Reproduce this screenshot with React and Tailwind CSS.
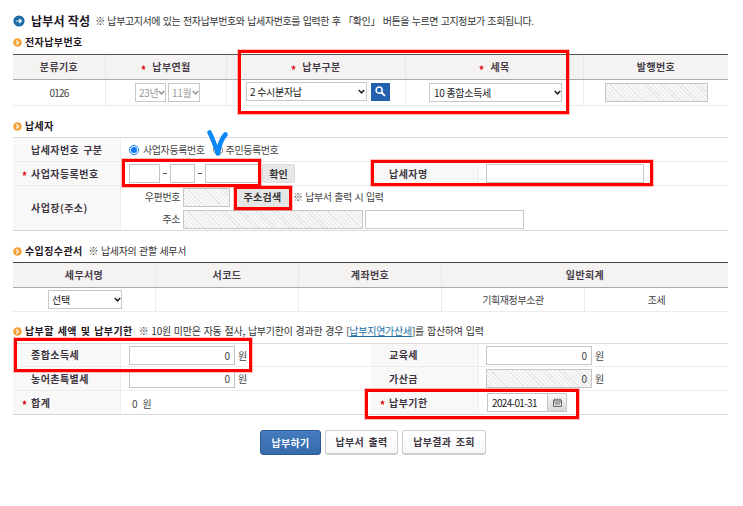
import React from 'react';

const hatch =
  'bg-[repeating-linear-gradient(45deg,#f8f8f8_0px,#f8f8f8_2px,#e6e6e6_2px,#e6e6e6_3px)]';

function Bullet() {
  return (
    <svg viewBox="0 0 18 18" className="h-[9px] w-[9px] shrink-0">
      <circle cx="9" cy="9" r="8.6" fill="#f5a238" />
      <path d="M6.5 5 L11 9 L6.5 13" fill="none" stroke="#fff" strokeWidth="2.4" />
    </svg>
  );
}

function Heading({ children, note, className }) {
  return (
    <div className={`flex h-4 items-center text-[#1c1420] ${className}`}>
      <Bullet />
      <h2 className="ml-[3px] text-[10px] font-bold tracking-[0.4px] [word-spacing:1.2px]">{children}</h2>
      {note}
    </div>
  );
}

function Star({ className = 'mr-[6px]' }) {
  return (
    <svg viewBox="0 0 10 10" className={`h-[5px] w-[5px] shrink-0 ${className}`}>
      <path d="M5 0 L6.2 3 L10 3.6 L7 6 L8 10 L5 8 L2 10 L3 6 L0 3.6 L3.8 3 Z" fill="#d9141c" />
    </svg>
  );
}

function Chevron({ className = '' }) {
  return (
    <svg viewBox="0 0 14 10" className={`h-[5px] w-[7px] shrink-0 ${className}`}>
      <path d="M1.5 2 L7 7.5 L12.5 2" fill="none" stroke="currentColor" strokeWidth="3.2" />
    </svg>
  );
}

function Select({ children, className }) {
  return (
    <div className={`flex h-[19px] shrink-0 items-center justify-between border border-[#c8c8c8] bg-white ${className}`}>
      <span className="tracking-[-0.3px]">{children}</span>
      <Chevron />
    </div>
  );
}

function Field({ className = '', disabled, children }) {
  return (
    <div
      className={`flex h-[19px] shrink-0 items-center justify-end border border-[#c6c6c6] pr-1 ${
        disabled ? hatch : 'bg-white'
      } ${className}`}
    >
      {children}
    </div>
  );
}

function HeadCell({ children, required, className = '' }) {
  return (
    <div className={`flex items-center justify-center border-r border-[#e8e8e8] font-bold tracking-[0.4px] text-[#463c48] last:border-r-0 ${className}`}>
      {required && <Star />}
      <span>{children}</span>
    </div>
  );
}

function Cell({ children, className = '' }) {
  return <div className={`flex items-center border-r border-[#ececec] last:border-r-0 ${className}`}>{children}</div>;
}

function Label({ children, required, className = '' }) {
  return (
    <div className={`flex w-[108px] shrink-0 items-center border-r border-[#eeeeee] bg-[#f8f8f8] pl-[9px] font-bold tracking-[0.45px] text-[#3c3440] [word-spacing:1.2px] ${className}`}>
      <span className="flex w-[9px] shrink-0">{required && <Star className="" />}</span>
      <span>{children}</span>
    </div>
  );
}

function Mark({ className }) {
  return <div className={`pointer-events-none absolute border-[3px] border-[#ff0000] outline-1 outline-[#ff000040] ${className}`} />;
}

function Dash() {
  return (
    <span className="flex w-[10px] justify-center">
      <span className="h-px w-1 bg-[#555]" />
    </span>
  );
}

export default function App() {
  return (
    <div className="relative h-[506px] w-[743px] overflow-hidden bg-white pl-[13px] font-['Noto_Sans_CJK_KR','Noto_Sans',sans-serif] text-[10px] leading-4 whitespace-nowrap text-[#444]">
      <div className="w-[715px]">
        <header className="flex items-center pt-[13px]">
          <svg viewBox="0 0 24 24" className="h-3 w-3 shrink-0">
            <circle cx="12" cy="12" r="11.2" fill="#1c6ea8" />
            <path d="M6.5 12 H16 M12.5 8 L16.5 12 L12.5 16" fill="none" stroke="#fff" strokeWidth="2.4" />
          </svg>
          <h1 className="ml-[6px] text-[12px] font-bold tracking-[0.2px] text-[#1c1420]">납부서 작성</h1>
          <p className="ml-[5px] tracking-[-0.4px] text-[#333] [word-spacing:0.8px]">
            ※ 납부고지서에 있는 전자납부번호와 납세자번호를 입력한 후 「확인」 버튼을 누르면 고지정보가 조회됩니다.
          </p>
        </header>

        <Heading className="mt-[5px]">전자납부번호</Heading>
        <section className="mt-1 border-t border-[#555]">
          <div className="grid h-[25px] grid-cols-[93px_121px_179px_178px_144px] border-b border-[#aaa] bg-[#f5f3f2]">
            <HeadCell>분류기호</HeadCell>
            <HeadCell required>납부연월</HeadCell>
            <HeadCell required>납부구분</HeadCell>
            <HeadCell required>세목</HeadCell>
            <HeadCell>발행번호</HeadCell>
          </div>
          <div className="grid h-[26px] grid-cols-[93px_121px_179px_178px_144px] border-b border-[#ececec]">
            <Cell className="justify-center tracking-[-0.8px]">0126</Cell>
            <Cell className="gap-[2px] pl-[29px] text-[#999]">
              <Select className="w-[31px] pl-[3px]">23년</Select>
              <Select className="w-8 pl-[3px]">11월</Select>
            </Cell>
            <Cell className="pb-[2px] pl-[19px] text-[#222]">
              <Select className="w-[121px] pr-px pl-[3px]">2 수시분자납</Select>
              <span className="ml-1 flex h-[18px] w-[19px] items-center justify-center bg-[#2460ad]">
                <svg viewBox="0 0 20 20" className="h-[11px] w-[11px]">
                  <circle cx="7.5" cy="7.5" r="5.5" fill="none" stroke="#fff" strokeWidth="2.8" />
                  <path d="M11.5 11.5 L18 18" stroke="#fff" strokeWidth="3.6" />
                </svg>
              </span>
            </Cell>
            <Cell className="pl-[23px] text-[#222]">
              <Select className="w-[133px] pl-1">10 종합소득세</Select>
            </Cell>
            <Cell className="pl-[21px]">
              <Field disabled className="w-[103px]" />
            </Cell>
          </div>
        </section>

        <Heading className="mt-3">납세자</Heading>
        <section className="mt-[3px] border-t border-[#dcdcdc]">
          <div className="flex h-6 border-b border-[#ededed]">
            <Label>납세자번호 구분</Label>
            <div className="flex items-center pl-2 tracking-[-0.4px]">
              <span className="flex h-[10px] w-[10px] items-center justify-center rounded-full border border-[#0b76f0]">
                <span className="h-[6px] w-[6px] rounded-full bg-[#0b76f0]" />
              </span>
              <span className="ml-1">사업자등록번호</span>
              <span className="ml-2 h-[10px] w-[10px] rounded-full border border-[#888]" />
              <span className="ml-[3px]">주민등록번호</span>
            </div>
          </div>
          <div className="flex h-6 border-b border-[#ededed]">
            <Label required>사업자등록번호</Label>
            <div className="flex w-[250px] items-center pl-2">
              <Field className="w-[31px]" />
              <Dash />
              <Field className="w-[25px]" />
              <Dash />
              <Field className="w-[55px]" />
              <span className="ml-[2px] flex h-[19px] w-[33px] items-center justify-center rounded-[2px] border border-[#dadada] bg-[#e8e6e6] font-bold text-[#333]">
                확인
              </span>
            </div>
            <Label>납세자명</Label>
            <div className="flex items-center pl-[7px]">
              <Field className="w-[158px]" />
            </div>
          </div>
          <div className="flex h-[45px] border-b border-[#d8d8d8]">
            <Label>사업장(주소)</Label>
            <div className="flex flex-col">
              <div className="mt-px flex h-5 items-center">
                <span className="w-[59px] text-right tracking-[-0.4px]">우편번호</span>
                <Field disabled className="ml-[3px] w-[47px]" />
                <span className="ml-[5px] flex h-[21px] w-[55px] items-center justify-center bg-[#e6e5e5] font-bold tracking-[0.3px] text-[#333]">
                  주소검색
                </span>
                <span className="ml-[3px] tracking-[-0.4px] [word-spacing:0.8px]">※ 납부서 출력 시 입력</span>
              </div>
              <div className="mt-[2px] flex h-5 items-center">
                <span className="w-[59px] text-right tracking-[-0.4px]">주소</span>
                <Field disabled className="ml-[3px] w-[180px]" />
                <Field className="ml-[2px] w-[159px]" />
              </div>
            </div>
          </div>
        </section>

        <Heading
          className="mt-3"
          note={<span className="ml-[6px] tracking-[-0.4px] text-[#333] [word-spacing:1px]">※ 납세자의 관할 세무서</span>}
        >
          수입징수관서
        </Heading>
        <section className="mt-[3px] border-t border-[#444]">
          <div className="grid h-[25px] grid-cols-[143px_143px_143px_286px] border-b border-[#aaa] bg-[#f5f3f2]">
            <HeadCell>세무서명</HeadCell>
            <HeadCell>서코드</HeadCell>
            <HeadCell>계좌번호</HeadCell>
            <HeadCell>일반회계</HeadCell>
          </div>
          <div className="grid h-6 grid-cols-5 border-b border-[#ececec] tracking-[-0.4px]">
            <Cell className="pl-[35px] text-[#222]">
              <Select className="w-[74px] pl-[3px]">선택</Select>
            </Cell>
            <Cell />
            <Cell />
            <Cell className="justify-center">기획재정부소관</Cell>
            <Cell className="justify-center">조세</Cell>
          </div>
        </section>

        <Heading
          className="mt-[11px]"
          note={
            <span className="ml-[6px] tracking-[-0.26px] text-[#333] [word-spacing:1px]">
              ※ 10원 미만은 자동 절사, 납부기한이 경과한 경우 [
              <a className="text-[#1a70a8] underline">납부지연가산세</a>]를 합산하여 입력
            </span>
          }
        >
          납부할 세액 및 납부기한
        </Heading>
        <section className="mt-1 border-t border-[#dcdcdc]">
          <div className="flex h-[23px] border-b border-[#ededed]">
            <Label>종합소득세</Label>
            <div className="flex w-[250px] items-center pt-px pl-2">
              <Field className="w-[106px]">0</Field>
              <span className="ml-[3px]">원</span>
            </div>
            <Label>교육세</Label>
            <div className="flex items-center pt-px pl-[7px]">
              <Field className="w-[106px]">0</Field>
              <span className="ml-[3px]">원</span>
            </div>
          </div>
          <div className="flex h-6 border-b border-[#ededed]">
            <Label>농어촌특별세</Label>
            <div className="flex w-[250px] items-center pl-2">
              <Field className="w-[106px]">0</Field>
              <span className="ml-[3px]">원</span>
            </div>
            <Label>가산금</Label>
            <div className="flex items-center pl-[7px]">
              <Field disabled className="w-[106px]">0</Field>
              <span className="ml-[3px]">원</span>
            </div>
          </div>
          <div className="flex h-6 border-b border-[#d8d8d8]">
            <Label required>합계</Label>
            <div className="flex w-[250px] items-center gap-[5px] pt-[3px] pl-[11px]">
              <span>0</span>
              <span>원</span>
            </div>
            <Label required>납부기한</Label>
            <div className="flex items-center pl-2">
              <div className="flex h-[19px] w-[61px] items-center border border-[#c6c6c6] pl-1 tracking-[-0.65px] text-[#222]">
                2024-01-31
              </div>
              <div className="flex h-[19px] w-[19px] items-center justify-center border border-l-0 border-[#c6c6c6] bg-linear-to-b from-[#fafafa] to-[#d8d8d8]">
                <svg viewBox="0 0 18 18" className="h-[9px] w-[9px]">
                  <path d="M1 4 H17 V17 H1 Z M4 1 V5 M9 1 V5 M14 1 V5 M1 8 H17 M4 12 H14" fill="none" stroke="#666" strokeWidth="2" />
                </svg>
              </div>
            </div>
          </div>
        </section>

        <div className="mt-[15px] flex gap-1 pl-[247px] font-bold tracking-[0.3px] text-[#3c3440]">
          <div className="flex h-[25px] w-[61px] items-center justify-center rounded-[3px] border border-[#2d5a97] bg-linear-to-b from-[#467cbf] to-[#366aab] text-white">
            납부하기
          </div>
          <div className="flex h-[25px] w-[73px] items-center justify-center rounded-[3px] border border-b-2 border-[#cecece] bg-linear-to-b from-white to-[#f8f8f8] [word-spacing:2px]">
            납부서 출력
          </div>
          <div className="flex h-[25px] w-[84px] items-center justify-center rounded-[3px] border border-b-2 border-[#cecece] bg-linear-to-b from-white to-[#f8f8f8] [word-spacing:2px]">
            납부결과 조회
          </div>
        </div>
      </div>

      <Mark className="top-[50px] left-[238px] h-[64px] w-[331px]" />
      <Mark className="top-[159px] left-[122px] h-[28px] w-[139px]" />
      <Mark className="top-[186px] left-[234px] h-[24px] w-[58px]" />
      <Mark className="top-[160px] left-[371px] h-[26px] w-[282px]" />
      <Mark className="top-[338px] left-[14px] h-[34px] w-[238px]" />
      <Mark className="top-[389px] left-[365px] h-[30px] w-[214px]" />
      <svg viewBox="0 0 24 30" className="pointer-events-none absolute top-[128px] left-[206px] h-[30px] w-6">
        <path d="M3.5 4.5 C6.5 10 9 17 12 25.5 C13 18 15 11 19.5 6.5" fill="none" stroke="#0b86f5" strokeWidth="4.6" strokeLinecap="round" strokeLinejoin="round" />
      </svg>
    </div>
  );
}
